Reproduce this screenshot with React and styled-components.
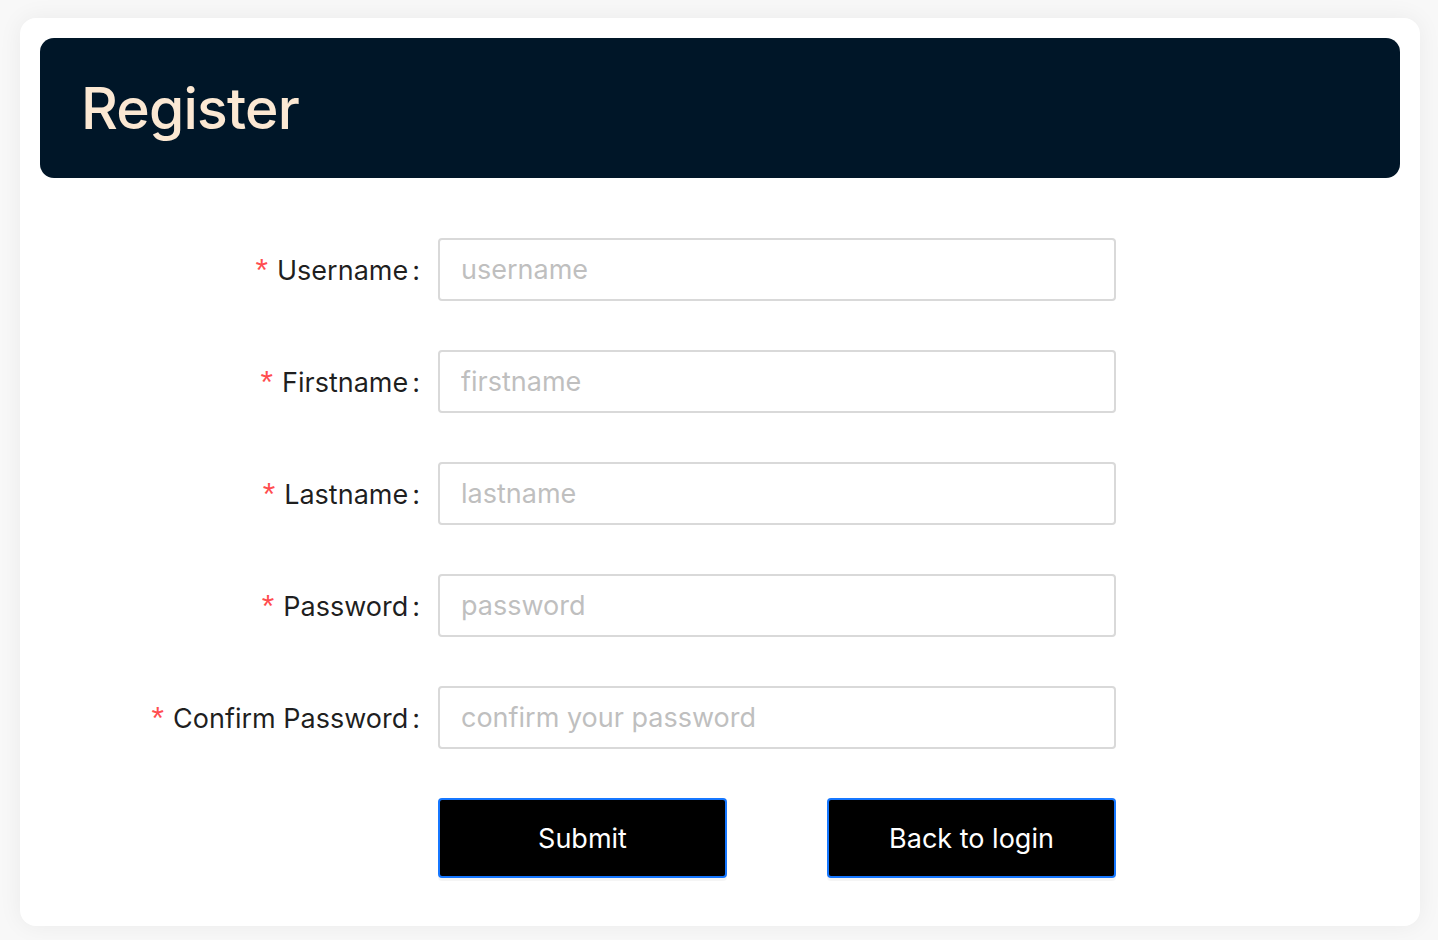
import React from "react";
import styled, { createGlobalStyle } from "styled-components";

const Global = createGlobalStyle`
  html, body { margin: 0; padding: 0; background: #f8f8f8; }
  body { font-family: Inter, "Noto Sans", "Liberation Sans", sans-serif; }
  * { box-sizing: border-box; }
`;

const Page = styled.div`
  padding: 18px 18px 14px 20px;
`;

const Card = styled.div`
  width: 1400px;
  background: #fff;
  border-radius: 16px;
  padding: 20px 20px 48px;
  box-shadow: 0 0 24px rgba(0, 0, 0, 0.06);
`;

const Header = styled.div`
  height: 140px;
  background: #001628;
  border-radius: 14px;
  display: flex;
  align-items: center;
  padding-left: 41px;
`;

const Title = styled.h1`
  margin: 0;
  color: #fbe8d3;
  font-size: 57px;
  font-weight: 500;
  letter-spacing: -0.8px;
`;

const Form = styled.form`
  display: flex;
  flex-direction: column;
  gap: 49px;
  padding-top: 60px;
`;

const Row = styled.div`
  display: flex;
  align-items: center;
`;

const Label = styled.label`
  width: 382px;
  display: flex;
  justify-content: flex-end;
  align-items: center;
  font-size: 27px;
  color: rgba(0, 0, 0, 0.88);
  padding-right: 2px;
  padding-top: 1px;
`;

const Star = styled.span`
  color: #ff4d4f;
  margin-right: 9px;
  font-size: 32px;
  line-height: 1;
  font-family: "Liberation Sans", sans-serif;
`;

const Colon = styled.span`
  margin-left: 4px;
`;

const Input = styled.input`
  margin-left: 16px;
  width: 678px;
  height: 63px;
  border: 2px solid #d9d9d9;
  border-radius: 4px;
  padding: 0 21px;
  font-family: inherit;
  font-size: 27px;
  color: rgba(0, 0, 0, 0.88);
  outline: none;
  &::placeholder { color: #bfbfbf; }
`;

const Buttons = styled.div`
  margin-left: 398px;
  width: 678px;
  display: flex;
  justify-content: space-between;
`;

const Button = styled.button`
  width: 289px;
  height: 80px;
  background: #000;
  color: #fff;
  border: 2px solid #1677ff;
  border-radius: 4px;
  font-family: inherit;
  font-size: 27px;
  box-shadow: 0 3px 0 rgba(0, 0, 0, 0.04);
  cursor: pointer;
`;

const fields = [
  ["Username", "username", "text"],
  ["Firstname", "firstname", "text"],
  ["Lastname", "lastname", "text"],
  ["Password", "password", "password"],
  ["Confirm Password", "confirm your password", "password"],
];

export default function App() {
  return (
    <>
      <Global />
      <Page>
        <Card>
          <Header>
            <Title>Register</Title>
          </Header>
          <Form onSubmit={(e) => e.preventDefault()}>
            {fields.map(([label, ph, type]) => (
              <Row key={label}>
                <Label>
                  <Star>*</Star>
                  {label}
                  <Colon>:</Colon>
                </Label>
                <Input placeholder={ph} type={type} />
              </Row>
            ))}
            <Buttons>
              <Button type="submit">Submit</Button>
              <Button type="button">Back to login</Button>
            </Buttons>
          </Form>
        </Card>
      </Page>
    </>
  );
}
